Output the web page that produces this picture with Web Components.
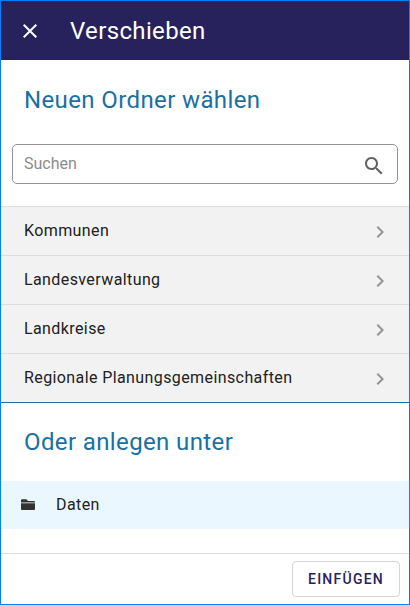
<!DOCTYPE html>
<html lang="de">
<head>
<meta charset="utf-8">
<title>Verschieben</title>
<style>
html, body { margin: 0; height: 100%; }
body { font-family: Roboto, "Liberation Sans", sans-serif; }
.first { padding-top: 2px; height: 76px; }
</style>
</head>
<body>
<move-dialog>
  <dialog-header slot="header">Verschieben</dialog-header>
  <section-title class="first">Neuen Ordner wählen</section-title>
  <search-field placeholder="Suchen"></search-field>
  <folder-list>
    <folder-row>Kommunen</folder-row>
    <folder-row>Landesverwaltung</folder-row>
    <folder-row>Landkreise</folder-row>
    <folder-row>Regionale Planungsgemeinschaften</folder-row>
  </folder-list>
  <section-title>Oder anlegen unter</section-title>
  <target-folder>Daten</target-folder>
  <action-button slot="footer">EINFÜGEN</action-button>
</move-dialog>
<script>
const define = (name, html, setup) => customElements.define(name, class extends HTMLElement {
  constructor() {
    super();
    const t = document.createElement('template');
    t.innerHTML = html;
    this.attachShadow({ mode: 'open' }).append(t.content.cloneNode(true));
  }
  connectedCallback() { if (setup) setup(this, this.shadowRoot); }
});

define('move-dialog', `
<style>
:host { display: flex; flex-direction: column; box-sizing: border-box; width: 410px; height: 605px; border: 1px solid #0080ff; background: #fff; }
main { flex: 1; display: flex; flex-direction: column; }
footer { box-sizing: border-box; height: 51px; border-top: 1px solid #ddd; display: flex; justify-content: flex-end; align-items: center; padding: 0 9px; }
</style>
<slot name="header"></slot>
<main><slot></slot></main>
<footer><slot name="footer"></slot></footer>`);

define('dialog-header', `
<style>
:host { display: flex; align-items: center; height: 59px; padding-left: 17px; background: #28225c; color: #fff; font-size: 24px; line-height: 32px; letter-spacing: .35px; }
svg { width: 24px; height: 24px; margin-right: 28px; fill: currentColor; }
</style>
<svg viewBox="0 0 24 24"><path d="M19 6.41 17.59 5 12 10.59 6.41 5 5 6.41 10.59 12 5 17.59 6.41 19 12 13.41 17.59 19 19 17.59 13.41 12z"/></svg>
<slot></slot>`);

define('section-title', `
<style>
:host { display: flex; align-items: center; height: 78px; padding-left: 23px; color: #1a6fa3; font-size: 24px; line-height: 32px; letter-spacing: .38px; }
</style>
<slot></slot>`);

define('search-field', `
<style>
:host { display: flex; align-items: center; box-sizing: border-box; height: 40px; margin: 6px 11px 22px; padding: 0 11px; border: 1px solid #949494; border-radius: 5px; color: #8c8c8c; font-size: 16px; }
span { flex: 1; line-height: 24px; }
svg { width: 24px; height: 24px; fill: #616161; margin-top: 3px; }
</style>
<span></span>
<svg viewBox="0 0 24 24"><path d="M15.5 14h-.79l-.28-.27C15.41 12.59 16 11.11 16 9.5 16 5.91 13.09 3 9.5 3S3 5.91 3 9.5 5.91 16 9.5 16c1.61 0 3.09-.59 4.23-1.57l.27.28v.79l5 4.99L20.49 19l-4.99-5zm-6 0C7.01 14 5 11.99 5 9.5S7.01 5 9.5 5 14 7.01 14 9.5 11.99 14 9.5 14z"/></svg>`,
(el, root) => { root.querySelector('span').textContent = el.getAttribute('placeholder'); });

define('folder-list', `
<style>
:host { display: flex; flex-direction: column; border-bottom: 1px solid #1a6fa3; }
</style>
<slot></slot>`);

define('folder-row', `
<style>
:host { display: flex; align-items: center; justify-content: space-between; height: 48px; padding: 0 17px 0 23px; border-top: 1px solid #ddd; background: #f2f2f2; color: #212121; font-size: 16px; letter-spacing: .4px; }
span { line-height: 24px; }
svg { width: 24px; height: 24px; fill: #949494; margin-top: 2px; }
</style>
<span><slot></slot></span>
<svg viewBox="0 0 24 24"><path d="M10 6 8.59 7.41 13.17 12l-4.58 4.59L10 18l6-6z"/></svg>`);

define('target-folder', `
<style>
:host { display: flex; align-items: center; height: 48px; padding-left: 20px; background: #ebf7ff; color: #212121; font-size: 16px; letter-spacing: .4px; }
span { line-height: 24px; }
svg { width: 14px; height: 12px; margin-right: 21px; }
</style>
<svg viewBox="0 0 14 12"><path fill="#303431" d="M0 1.2Q0 .3 1 .3H5.5L7 2H13Q14 2 14 3V10Q14 11 13 11H1Q0 11 0 10Z"/><path fill="#929a9e" d="M0 3H14V4.5H0Z"/></svg>
<span><slot></slot></span>`);

define('action-button', `
<style>
:host { display: flex; align-items: center; justify-content: center; box-sizing: border-box; width: 108px; height: 36px; border: 1px solid #d5d5d5; border-radius: 4px; color: #28225c; font-size: 14px; font-weight: 500; letter-spacing: 1.25px; }
</style>
<slot></slot>`);
</script>
</body>
</html>
